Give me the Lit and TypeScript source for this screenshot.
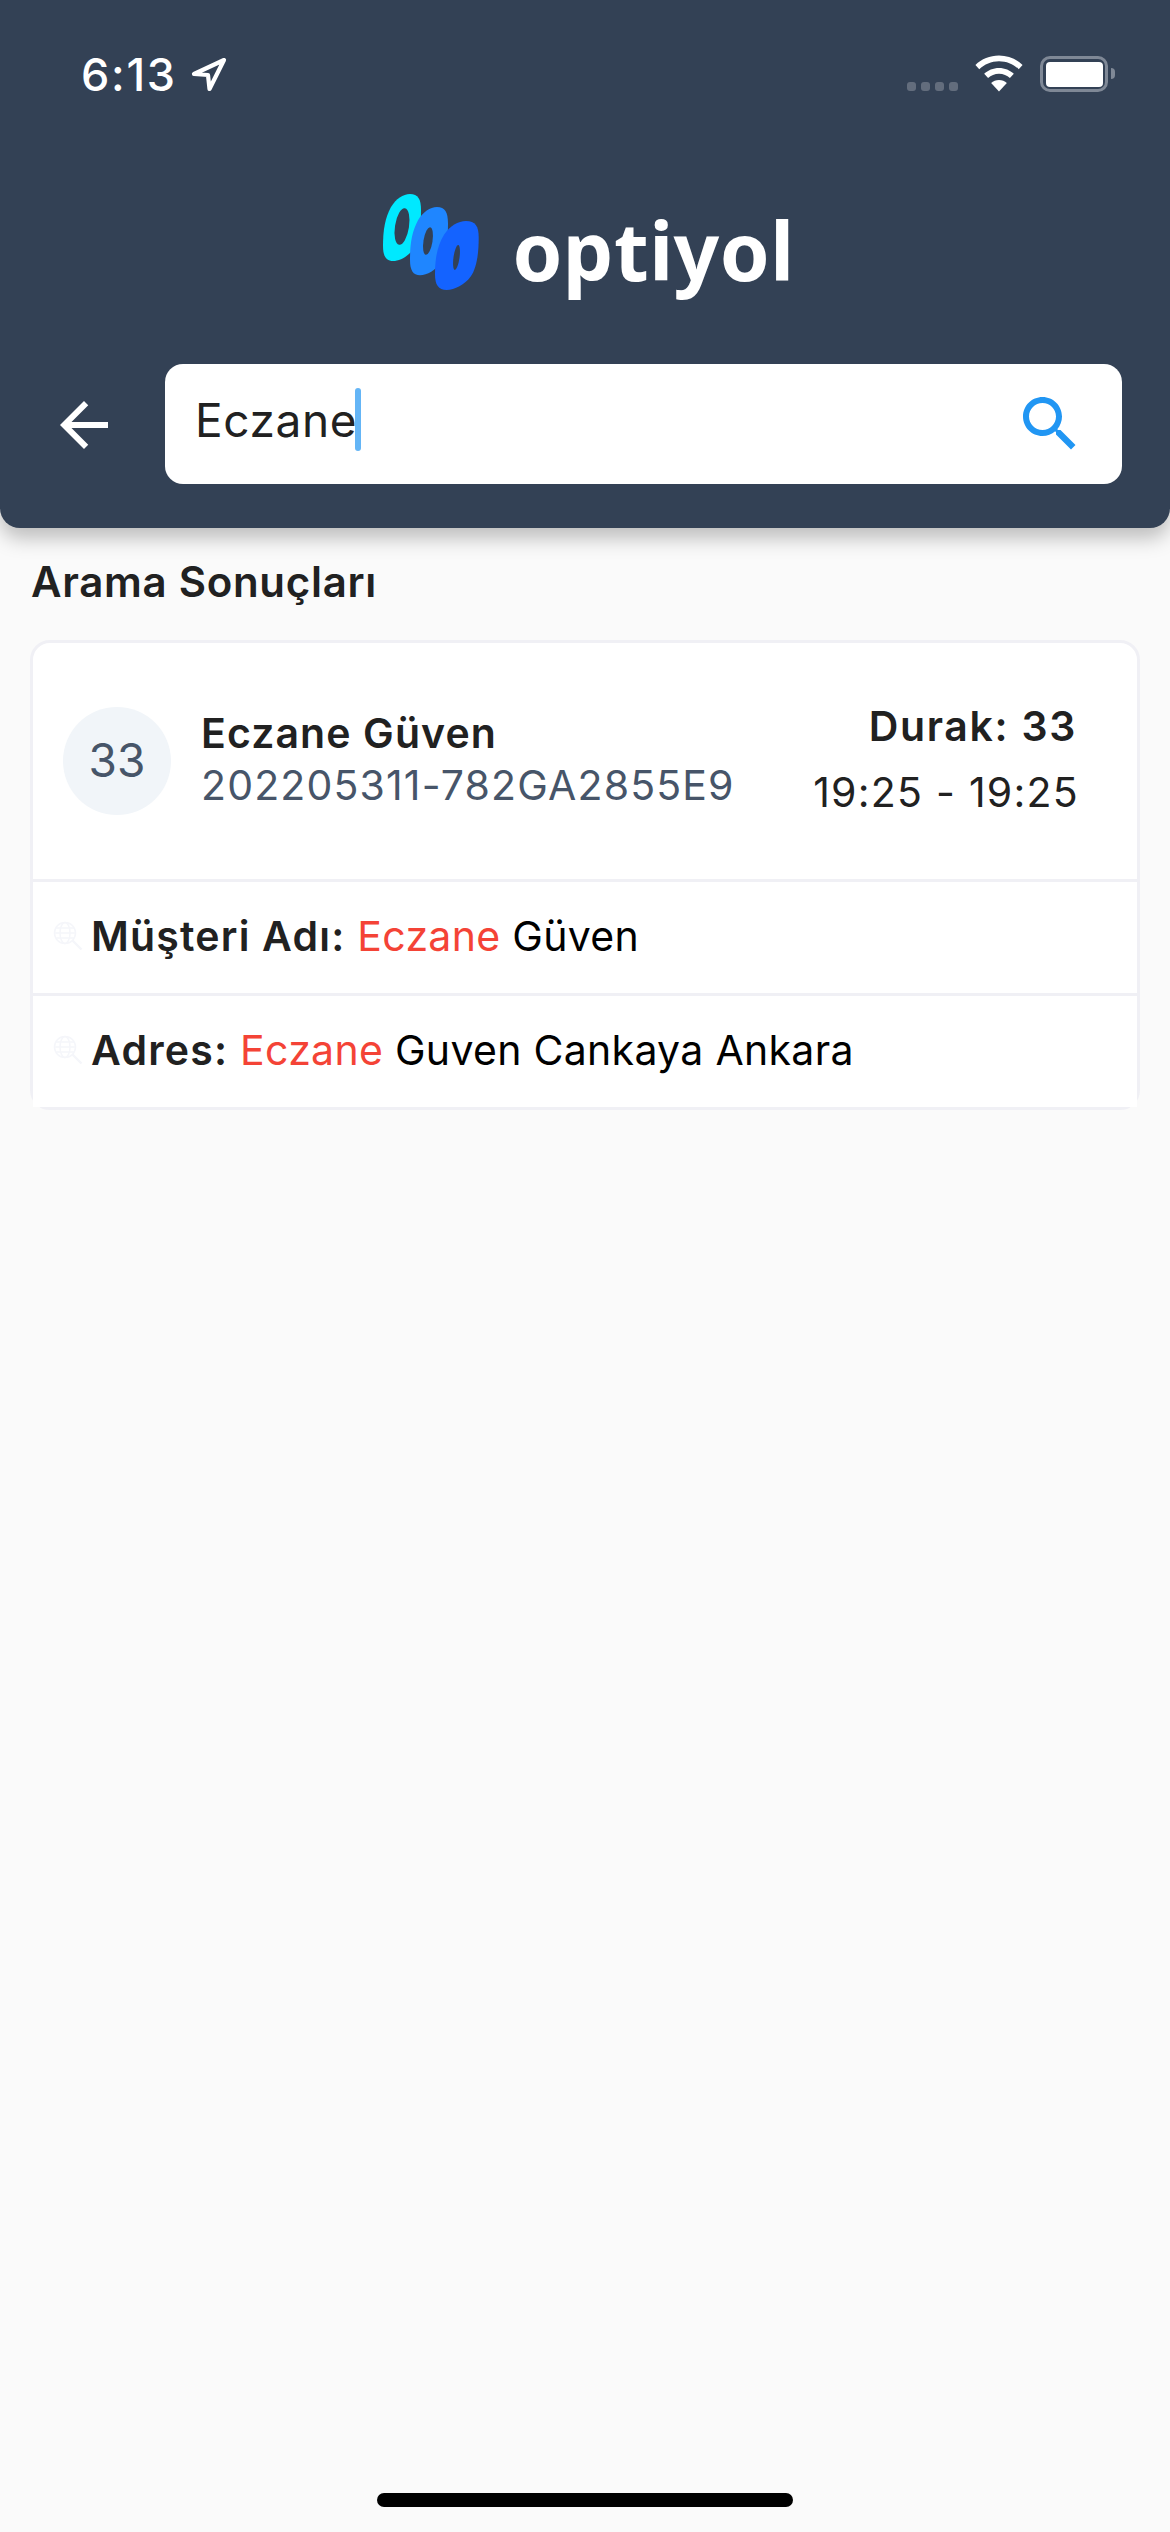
import { html, css, LitElement } from 'lit';
import { customElement } from 'lit/decorators.js';

const RING = 'M27 0C35 0 38 5 38 16C38 33 36 46 31 54C26 62 17 67 10 67C3 67 0 62 0 52C0 36 2 24 8 13C13 5 20 0 27 0Z';

@customElement('app-root')
export class AppRoot extends LitElement {
  render() {
    return html`
      <header class="top">
        <div class="status">
          <div class="clock">
            <span>6:13</span>
            <svg class="loc" viewBox="0 0 36 35" fill="none" stroke="#fff" stroke-width="4.2" stroke-linejoin="round">
              <path d="M33 3 L3 17 L17 18 L18.500 32 Z" />
            </svg>
          </div>
          <div class="indicators">
            <div class="dots"><i></i><i></i><i></i><i></i></div>
            <svg class="wifi" viewBox="0 0 44 33" fill="#fff">
              <path d="M22 0C13.600 0 6 3.300.4 8.600l3.500 3.900C8.600 8 15 5.200 22 5.200S35.400 8 40.100 12.500l3.500-3.900C38 3.300 30.400 0 22 0z" />
              <path d="M22 11.400c-5.300 0-10.100 2.100-13.600 5.400l3.600 3.900c2.600-2.400 6.100-3.900 10-3.900s7.400 1.500 10 3.900l3.600-3.900c-3.500-3.300-8.300-5.400-13.600-5.400z" />
              <path d="M22 22.500c-2.800 0-5.300 1.100-7.200 2.800L22 33l7.200-7.700c-1.900-1.700-4.400-2.800-7.200-2.800z" />
            </svg>
            <div class="battery"><div class="level"></div></div>
            <div class="nub"></div>
          </div>
        </div>

        <div class="brand">
          <svg class="mark" viewBox="0 0 97 97">
            <path d=${RING} fill="#00e9ff" transform="translate(1 0)" />
            <ellipse cx="20" cy="32.500" rx="7" ry="18.500" fill="#334155" transform="rotate(9 20 32.500)" />
            <path d=${RING} fill="#1f86ff" transform="translate(28 13) scale(1 1.020)" />
            <ellipse cx="46" cy="47" rx="4.500" ry="14" fill="#334155" transform="rotate(9 46 47)" />
            <path d=${RING} fill="#1463ff" transform="translate(53 27) scale(1.150 1.030)" />
            <ellipse cx="74.500" cy="63.500" rx="3" ry="12.500" fill="#334155" transform="rotate(8 74.500 63.500)" />
          </svg>
          <span class="word">optiyol</span>
        </div>

        <div class="search-row">
          <svg class="back" viewBox="0 0 24 24" fill="#fff">
            <path d="M20 11H7.830l5.590-5.590L12 4l-8 8 8 8 1.410-1.410L7.830 13H20v-2z" />
          </svg>
          <div class="search">
            <div class="field"><span class="query">Eczane</span><span class="caret"></span></div>
            <svg class="glass" viewBox="0 0 24 24" fill="#2196f3">
              <path d="M15.500 14h-.790l-.280-.270C15.410 12.590 16 11.110 16 9.500 16 5.910 13.090 3 9.500 3S3 5.910 3 9.500 5.910 16 9.500 16c1.610 0 3.090-.590 4.230-1.570l.270.280v.790l5 4.990L20.490 19l-4.990-5zm-6 0C7.010 14 5 11.990 5 9.500S7.010 5 9.500 5 14 7.010 14 9.500 11.990 14 9.500 14z" />
            </svg>
          </div>
        </div>
      </header>

      <main class="content">
        <h2 class="title">Arama Sonuçları</h2>
        <section class="card">
          <div class="stop">
            <div class="badge">33</div>
            <div class="who">
              <div class="name">Eczane Güven</div>
              <div class="code">202205311-782GA2855E9</div>
            </div>
            <div class="when">
              <div class="durak">Durak: 33</div>
              <div class="time">19:25 - 19:25</div>
            </div>
          </div>
          <div class="match">
            ${this.globe()}
            <span><b>Müşteri Adı:</b> <em>Eczane</em> Güven</span>
          </div>
          <div class="match last">
            ${this.globe()}
            <span><b>Adres:</b> <em>Eczane</em> Guven Cankaya Ankara</span>
          </div>
        </section>
      </main>

      <div class="home"></div>
    `;
  }

  globe() {
    return html`
      <svg class="globe" viewBox="0 0 30 30" fill="none" stroke="#f5f6fa" stroke-width="1.500">
        <circle cx="12" cy="12" r="10.500" />
        <ellipse cx="12" cy="12" rx="5" ry="10.500" />
        <path d="M1.500 12h21M3 7h18M3 17h18" />
        <path d="M19.500 19.500L28.500 28.500" stroke-width="2.400" />
      </svg>
    `;
  }

  static styles = css`
    :host {
      display: flex;
      flex-direction: column;
      height: 2532px;
      background: #fafafa;
      font-family: Inter, 'Liberation Sans', sans-serif;
      color: #212121;
      overflow: hidden;
    }

    .top {
      height: 528px;
      box-sizing: border-box;
      background: #334155;
      border-radius: 0 0 20px 20px;
      box-shadow: 0 10px 20px rgba(0, 0, 0, 0.25);
      display: flex;
      flex-direction: column;
      flex: none;
    }

    .status {
      display: flex;
      justify-content: space-between;
      padding: 55px 55px 0 81px;
      height: 37px;
      color: #fff;
    }

    .clock {
      display: flex;
      align-items: center;
      gap: 14px;
      height: 39px;
      font-size: 45px;
      font-weight: 500;
      letter-spacing: 1.700px;
      line-height: 39px;
    }

    .loc {
      width: 36px;
      height: 35px;
    }

    .indicators {
      display: flex;
      align-items: flex-start;
    }

    .dots {
      display: flex;
      gap: 5px;
      margin: 27px 17px 0 0;
    }

    .dots i {
      width: 9px;
      height: 9px;
      border-radius: 3px;
      background: #636d7d;
    }

    .wifi {
      width: 48px;
      height: 37px;
      margin-right: 17px;
    }

    .battery {
      width: 68px;
      height: 36px;
      box-sizing: border-box;
      border: 3.500px solid #7f8896;
      border-radius: 10px;
      padding: 2.500px;
      margin-top: 1px;
    }

    .level {
      height: 100%;
      background: #fff;
      border-radius: 4px;
    }

    .nub {
      width: 4px;
      height: 11px;
      margin: 13px 0 0 3px;
      background: #7f8896;
      border-radius: 0 4px 4px 0;
    }

    .brand {
      display: flex;
      align-items: center;
      justify-content: center;
      gap: 33px;
      margin-top: 102px;
      height: 97px;
      padding-left: 7px;
    }

    .mark {
      width: 97px;
      height: 97px;
    }

    .word {
      margin-top: 15px;
      font-family: 'Noto Sans', sans-serif;
      font-size: 80px;
      font-weight: 700;
      letter-spacing: 0.5px;
      color: #fff;
      line-height: 1;
      filter: blur(0.7px);
    }

    .search-row {
      display: flex;
      align-items: center;
      gap: 45px;
      margin-top: 73px;
      padding: 0 48px;
    }

    .back {
      width: 72px;
      height: 72px;
      margin-top: 2px;
      flex: none;
    }

    .search {
      flex: 1;
      height: 120px;
      box-sizing: border-box;
      padding: 0 36px 0 30px;
      display: flex;
      align-items: center;
      justify-content: space-between;
      background: #fff;
      border-radius: 18px;
    }

    .field {
      display: flex;
      align-items: center;
      margin-bottom: 9px;
    }

    .query {
      font-size: 46px;
      letter-spacing: 0.6px;
      color: #212121;
    }

    .caret {
      width: 6px;
      height: 63px;
      background: #64b5f6;
      border-radius: 3px;
      margin-left: -2px;
    }

    .glass {
      width: 72px;
      height: 72px;
    }

    .content {
      padding: 0 30px;
    }

    .title {
      margin: 32px 0 0 1px;
      font-size: 42px;
      font-weight: 600;
      letter-spacing: 0.7px;
      line-height: 44px;
      color: #212121;
    }

    .card {
      margin-top: 36px;
      background: #fff;
      border: 3px solid #f0f0f5;
      border-radius: 20px;
    }

    .stop {
      height: 239px;
      box-sizing: border-box;
      display: flex;
      align-items: center;
      padding: 0 60px 0 30px;
      border-bottom: 3px solid #f0f0f5;
    }

    .badge {
      width: 108px;
      height: 108px;
      box-sizing: border-box;
      padding-bottom: 2px;
      border-radius: 50%;
      background: #f1f5f9;
      color: #475569;
      font-size: 46px;
      display: flex;
      align-items: center;
      justify-content: center;
      flex: none;
    }

    .who {
      margin: 0 0 4px 30px;
      flex: 1;
    }

    .name {
      font-size: 41px;
      font-weight: 600;
      letter-spacing: 1.100px;
      line-height: 52px;
    }

    .code {
      font-size: 41px;
      line-height: 52px;
      color: #475569;
      letter-spacing: 1.150px;
    }

    .when {
      margin-bottom: 4px;
      text-align: right;
    }

    .durak {
      font-size: 41px;
      font-weight: 600;
      letter-spacing: 1.700px;
      line-height: 52px;
      margin-bottom: 14px;
    }

    .time {
      font-size: 41px;
      line-height: 52px;
      letter-spacing: 1.250px;
      margin-right: -2px;
    }

    .match {
      height: 114px;
      box-sizing: border-box;
      display: flex;
      align-items: center;
      gap: 8px;
      padding: 0 0 3px 20px;
      border-bottom: 3px solid #f0f0f5;
      font-size: 41px;
      color: #000;
      letter-spacing: 0.3px;
    }

    .match.last {
      height: 111px;
      border-bottom: 0;
      background: #fff;
    }

    .match b {
      font-weight: 600;
      letter-spacing: 1.200px;
      color: #212121;
    }

    .match em {
      font-style: normal;
      color: #f44336;
    }

    .globe {
      width: 30px;
      height: 30px;
      flex: none;
    }

    .home {
      width: 416px;
      height: 14px;
      margin: auto auto 25px;
      background: #000;
      border-radius: 7px;
    }
  `;
}
